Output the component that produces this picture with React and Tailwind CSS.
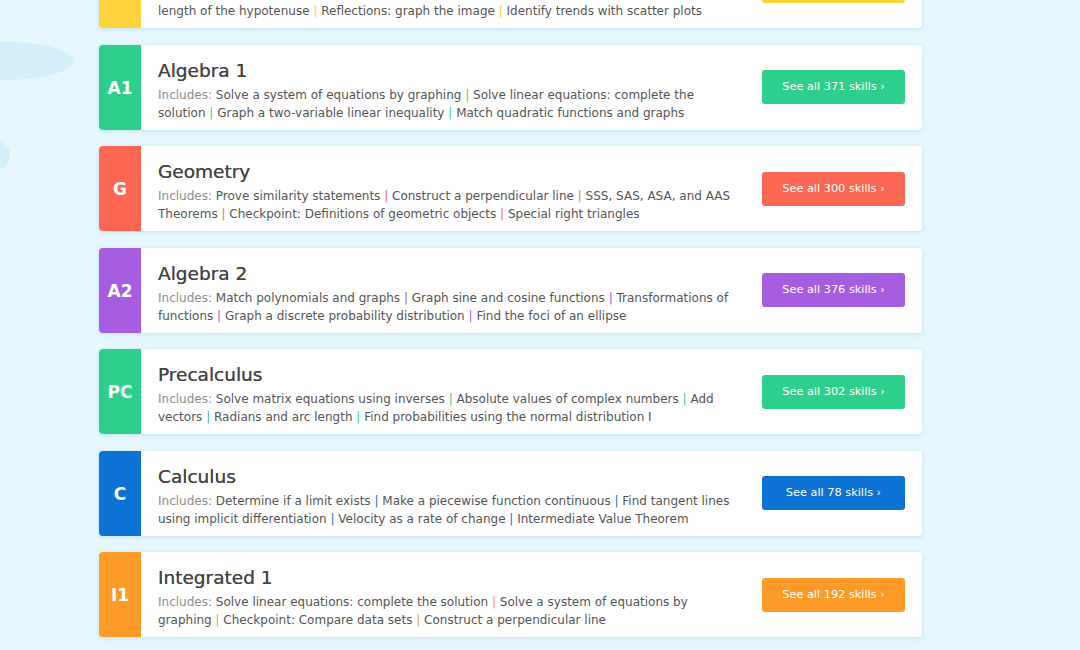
import React from "react";

const courses = [
  {
    code: "8",
    title: "Grade 8",
    skills: 306,
    btn: "bg-[#fdd23a]",
    block: "bg-[#fdd23a]",
    sep: "text-[#fdd23a]",
    items: [
      "Solve equations with variables on both sides",
      "Pythagorean theorem: find the",
      "length of the hypotenuse",
      "Reflections: graph the image",
      "Identify trends with scatter plots",
    ],
    breakAfter: 1,
  },
  {
    code: "A1",
    title: "Algebra 1",
    skills: 371,
    btn: "bg-[#2ecf8c]",
    block: "bg-[#2ecf8c]",
    sep: "text-[#2ecf8c]",
    items: [
      "Solve a system of equations by graphing",
      "Solve linear equations: complete the solution",
      "Graph a two-variable linear inequality",
      "Match quadratic functions and graphs",
    ],
  },
  {
    code: "G",
    title: "Geometry",
    skills: 300,
    btn: "bg-[#fc6753]",
    block: "bg-[#fc6753]",
    sep: "text-[#fc6753]",
    items: [
      "Prove similarity statements",
      "Construct a perpendicular line",
      "SSS, SAS, ASA, and AAS Theorems",
      "Checkpoint: Definitions of geometric objects",
      "Special right triangles",
    ],
  },
  {
    code: "A2",
    title: "Algebra 2",
    skills: 376,
    btn: "bg-[#a65ddf]",
    block: "bg-[#a65ddf]",
    sep: "text-[#a65ddf]",
    items: [
      "Match polynomials and graphs",
      "Graph sine and cosine functions",
      "Transformations of functions",
      "Graph a discrete probability distribution",
      "Find the foci of an ellipse",
    ],
  },
  {
    code: "PC",
    title: "Precalculus",
    skills: 302,
    btn: "bg-[#2ecf8c]",
    block: "bg-[#2ecf8c]",
    sep: "text-[#2ecf8c]",
    items: [
      "Solve matrix equations using inverses",
      "Absolute values of complex numbers",
      "Add vectors",
      "Radians and arc length",
      "Find probabilities using the normal distribution I",
    ],
  },
  {
    code: "C",
    title: "Calculus",
    skills: 78,
    btn: "bg-[#0c72d3]",
    block: "bg-[#0c72d3]",
    sep: "text-[#0c72d3]",
    items: [
      "Determine if a limit exists",
      "Make a piecewise function continuous",
      "Find tangent lines using implicit differentiation",
      "Velocity as a rate of change",
      "Intermediate Value Theorem",
    ],
  },
  {
    code: "I1",
    title: "Integrated 1",
    skills: 192,
    btn: "bg-[#fd9a28]",
    block: "bg-[#fd9a28]",
    sep: "text-[#fd9a28]",
    items: [
      "Solve linear equations: complete the solution",
      "Solve a system of equations by graphing",
      "Checkpoint: Compare data sets",
      "Construct a perpendicular line",
    ],
  },
];

function Card({ c }) {
  return (
    <div className="flex h-[85px] w-[823px] rounded-[4px] bg-white shadow-[0_1px_4px_rgba(120,180,210,0.35)]">
      <div
        className={`flex w-[42px] shrink-0 items-center justify-center rounded-l-[4px] pt-[3px] text-[17px] font-bold text-white ${c.block}`}
      >
        {c.code}
      </div>
      <div className="flex flex-1 items-center pl-[17px] pr-[17px]">
        <div className="w-[585px] pt-[6px]">
          <div className="text-[18.5px] leading-[24px] text-[#454545] [text-shadow:0_0_0.4px_#454545]">
            {c.title}
          </div>
          <div className="mt-[3px] text-[12px] leading-[18px] text-[#555]">
            <span className="text-[#8e8e8e]">Includes: </span>
            {c.items.map((it, i) => (
              <React.Fragment key={i}>
                {i > 0 && c.breakAfter === i - 1 ? <br /> : null}
                {i > 0 && c.breakAfter !== i - 1 && <span className={c.sep}> | </span>}
                {it}
              </React.Fragment>
            ))}
          </div>
        </div>
        <div className="ml-auto">
          <div
            className={`flex h-[34px] w-[143px] items-center justify-center rounded-[3px] pt-[1px] text-[11.3px] text-white ${c.btn}`}
          >
            See all {c.skills} skills ›
          </div>
        </div>
      </div>
    </div>
  );
}

export default function App() {
  return (
    <div
      className="relative h-[650px] w-[1080px] overflow-hidden bg-[#e5f7fd]"
      style={{ fontFamily: '"DejaVu Sans", Verdana, sans-serif' }}
    >
      <div className="absolute left-[-60px] top-[42px] h-[38px] w-[133px] rounded-[50%] bg-[#d2effa]" />
      <div className="absolute left-[-30px] top-[138px] h-[34px] w-[40px] rounded-[50%] bg-[#d2effa]" />
      <div className="relative mt-[-57px] flex flex-col gap-[16.5px] pl-[99px]">
        {courses.map((c) => (
          <Card key={c.code} c={c} />
        ))}
      </div>
    </div>
  );
}
